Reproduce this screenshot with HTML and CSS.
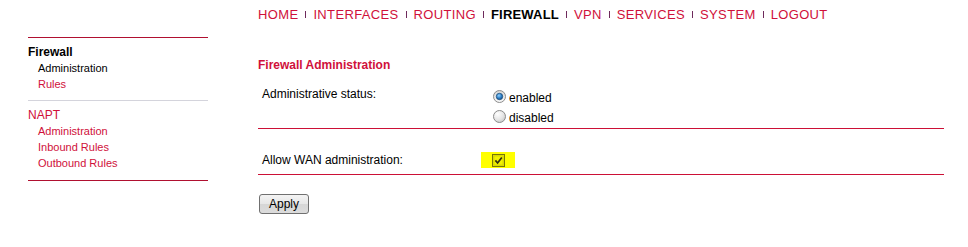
FILE: index.html
```html
<!DOCTYPE html>
<html lang="en">
<head>
<meta charset="utf-8">
<title>Firewall Administration</title>
<link rel="stylesheet" href="styles.css">
</head>
<body>
<div class="page">
  <aside class="sidebar">
    <div class="side-group">
      <div class="side-title">Firewall</div>
      <a class="side-link current" href="#">Administration</a>
      <a class="side-link" href="#">Rules</a>
    </div>
    <div class="side-group last">
      <a class="side-title napt" href="#">NAPT</a>
      <a class="side-link" href="#">Administration</a>
      <a class="side-link" href="#">Inbound Rules</a>
      <a class="side-link" href="#">Outbound Rules</a>
    </div>
  </aside>
  <main class="main">
    <nav class="topnav">
      <a href="#">HOME</a><span class="sep"></span><a href="#">INTERFACES</a><span class="sep"></span><a href="#">ROUTING</a><span class="sep"></span><a class="active" href="#">FIREWALL</a><span class="sep"></span><a href="#">VPN</a><span class="sep"></span><a href="#">SERVICES</a><span class="sep"></span><a href="#">SYSTEM</a><span class="sep"></span><a href="#">LOGOUT</a>
    </nav>
    <h1 class="section-title">Firewall Administration</h1>
    <div class="form-row status-row">
      <div class="label">Administrative status:</div>
      <div class="options">
        <div class="opt">
          <svg class="radio" width="13" height="13" viewBox="0 0 13 13">
            <defs>
              <linearGradient id="rb" x1="0" y1="0" x2="0" y2="1">
                <stop offset="0" stop-color="#d4d4d4"/>
                <stop offset="1" stop-color="#fafafa"/>
              </linearGradient>
              <radialGradient id="dot" cx="0.4" cy="0.35" r="0.7">
                <stop offset="0" stop-color="#8fd0ff"/>
                <stop offset="0.6" stop-color="#2a7cc4"/>
                <stop offset="1" stop-color="#174f86"/>
              </radialGradient>
            </defs>
            <circle cx="6.5" cy="6.5" r="6" fill="url(#rb)" stroke="#8c8c8c"/>
            <circle cx="6.5" cy="6.5" r="3.2" fill="url(#dot)" stroke="#1f4f7c" stroke-width="0.8"/>
          </svg>
          <span>enabled</span>
        </div>
        <div class="opt">
          <svg class="radio" width="13" height="13" viewBox="0 0 13 13">
            <defs>
              <radialGradient id="rb2" cx="0.35" cy="0.3" r="0.8">
                <stop offset="0" stop-color="#ffffff"/>
                <stop offset="0.6" stop-color="#e4e4e4"/>
                <stop offset="1" stop-color="#c4c4c4"/>
              </radialGradient>
            </defs>
            <circle cx="6.5" cy="6.5" r="6" fill="url(#rb2)" stroke="#8c8c8c"/>
          </svg>
          <span>disabled</span>
        </div>
      </div>
    </div>
    <div class="form-row wan-row">
      <div class="label">Allow WAN administration:</div>
      <div class="options">
        <span class="highlight">
          <svg class="check" width="13" height="13" viewBox="0 0 13 13">
            <rect x="0.5" y="0.5" width="12" height="12" fill="#e2e200" stroke="#76760a"/>
            <rect x="2" y="2" width="9" height="9" fill="#f2f200" stroke="#c8c800" stroke-width="0.6"/>
            <path d="M3.4 6.4 L5.6 9 L9.8 3.4" fill="none" stroke="#2e2e10" stroke-width="1.7"/>
          </svg>
        </span>
      </div>
    </div>
    <button class="apply" type="button">Apply</button>
  </main>
</div>
</body>
</html>
```

FILE: styles.css
```css
* {
  box-sizing: border-box;
}

body {
  margin: 0;
  background: #ffffff;
  font-family: "Liberation Sans", Arial, sans-serif;
  color: #000000;
}

a {
  text-decoration: none;
}

.page {
  display: flex;
  align-items: flex-start;
}

/* Sidebar */
.sidebar {
  width: 180px;
  margin-left: 28px;
  margin-top: 37px;
  border-top: 1px solid #b01030;
  display: flex;
  flex-direction: column;
}

.side-group {
  display: flex;
  flex-direction: column;
  padding: 6px 0 8px;
  border-bottom: 1px solid #d4d4dc;
}

.side-group.last {
  padding-bottom: 9px;
  border-bottom: 1px solid #b01030;
}

.side-title {
  font-size: 12px;
  line-height: 16px;
  font-weight: bold;
  color: #000000;
}

.side-title.napt {
  font-weight: normal;
  color: #d0103a;
}

.side-link {
  font-size: 11px;
  line-height: 16px;
  padding-left: 10px;
  color: #d0103a;
}

.side-link.current {
  color: #000000;
}

/* Main */
.main {
  width: 686px;
  margin-left: 50px;
  display: flex;
  flex-direction: column;
  align-items: flex-start;
}

.topnav {
  padding-top: 7px;
  font-size: 13px;
  line-height: 16px;
  letter-spacing: 0.35px;
  white-space: nowrap;
}

.topnav a {
  color: #d0103a;
}

.topnav a.active {
  color: #000000;
  font-weight: bold;
  letter-spacing: 0.2px;
}

.sep {
  display: inline-block;
  width: 1px;
  height: 7px;
  margin: 0 7px 1px;
  background: #6e2a5c;
  vertical-align: baseline;
}

.section-title {
  margin: 34px 0 0;
  font-size: 12px;
  line-height: 16px;
  font-weight: bold;
  color: #d0103a;
}

.form-row {
  width: 100%;
  display: grid;
  grid-template-columns: 235px 1fr;
  border-bottom: 1px solid #cc1036;
  font-size: 12px;
}

.status-row {
  margin-top: 11px;
}

.status-row .label {
  padding: 2px 0 0 4px;
  line-height: 16px;
}

.status-row .options {
  padding-top: 4px;
}

.opt {
  display: flex;
  align-items: center;
  height: 20px;
  line-height: 20px;
}

.radio {
  margin: 0 3px 4px 0;
  flex: none;
}

.wan-row {
  padding: 23px 0 6px;
}

.wan-row .label {
  padding-left: 4px;
  line-height: 16px;
}

.highlight {
  display: flex;
  align-items: center;
  justify-content: center;
  width: 34px;
  height: 16px;
  margin-left: -12px;
  background: #ffff00;
}

.apply {
  margin: 19px 0 0 1px;
  width: 50px;
  height: 20px;
  padding: 0;
  font-family: "Liberation Sans", Arial, sans-serif;
  font-size: 12px;
  color: #000000;
  border: 1px solid #707070;
  border-radius: 3px;
  background: linear-gradient(#f4f4f4, #e6e6e6 50%, #d6d6d6 51%, #dcdcdc);
}
```
